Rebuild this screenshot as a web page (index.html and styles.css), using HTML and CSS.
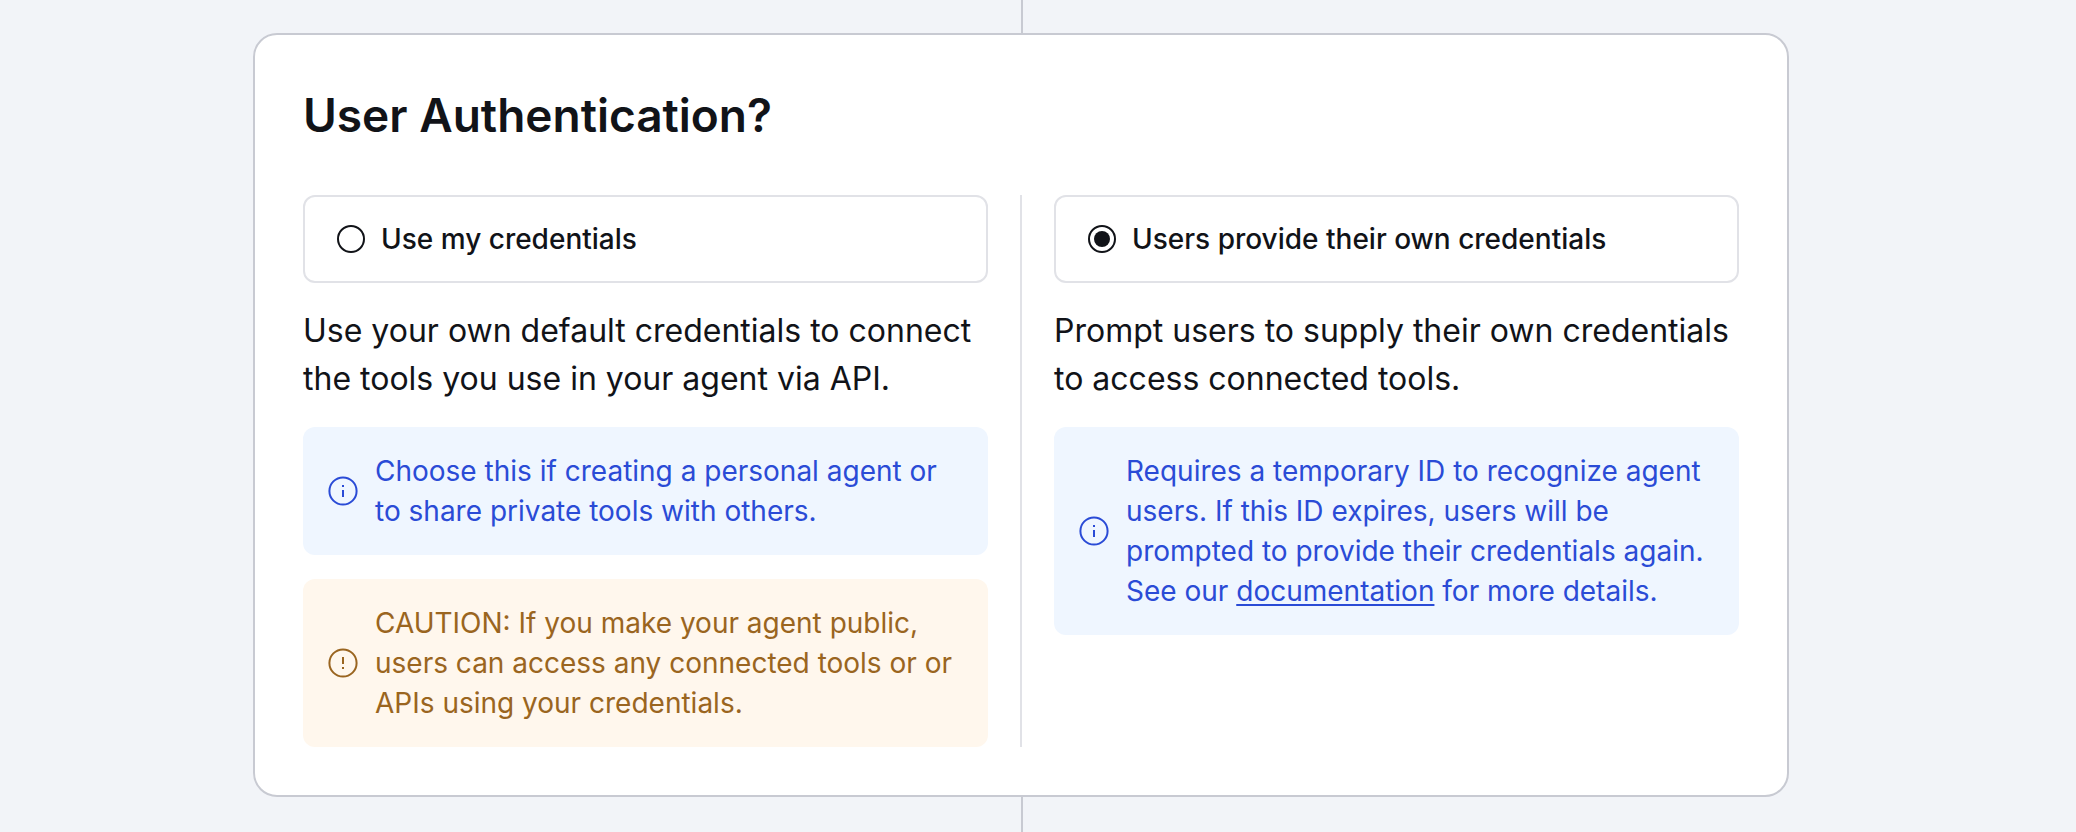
FILE: index.html
```html
<!DOCTYPE html>
<html lang="en">
<head>
<meta charset="utf-8">
<title>User Authentication</title>
<link rel="stylesheet" href="styles.css">
</head>
<body>
<main class="flow">
  <div class="connector connector-top"></div>
  <section class="card">
    <h1 class="card-title" id="auth-title">User Authentication?</h1>
    <div class="choices" role="radiogroup" aria-labelledby="auth-title">
      <div class="choice">
        <label class="option">
          <input class="radio" type="radio" name="auth" value="mine">
          <span>Use my credentials</span>
        </label>
        <p class="description">Use your own default credentials to connect the tools you use in your agent via API.</p>
        <div class="note note-info">
          <svg class="note-icon" viewBox="0 0 32 32" aria-hidden="true">
            <circle cx="16" cy="16" r="13.6" fill="none" stroke="currentColor" stroke-width="2"/>
            <path d="M15 15h2v7h-2zM15 10h2v2h-2z" fill="currentColor"/>
          </svg>
          <p class="note-text">Choose this if creating a personal agent or to share private tools with others.</p>
        </div>
        <div class="note note-caution">
          <svg class="note-icon" viewBox="0 0 32 32" aria-hidden="true">
            <circle cx="16" cy="16" r="13.6" fill="none" stroke="currentColor" stroke-width="2"/>
            <path d="M15 10h2v7h-2zM15 20h2v2h-2z" fill="currentColor"/>
          </svg>
          <p class="note-text">CAUTION: If you make your agent public, users can access any connected tools or or APIs using your credentials.</p>
        </div>
      </div>
      <div class="divider"></div>
      <div class="choice">
        <label class="option">
          <input class="radio" type="radio" name="auth" value="users" checked>
          <span>Users provide their own credentials</span>
        </label>
        <p class="description">Prompt users to supply their own credentials to access connected tools.</p>
        <div class="note note-info">
          <svg class="note-icon" viewBox="0 0 32 32" aria-hidden="true">
            <circle cx="16" cy="16" r="13.6" fill="none" stroke="currentColor" stroke-width="2"/>
            <path d="M15 15h2v7h-2zM15 10h2v2h-2z" fill="currentColor"/>
          </svg>
          <p class="note-text">Requires a temporary ID to recognize agent users. If this ID expires, users will be prompted to provide their credentials again. See our <a class="link" href="#documentation">documentation</a> for more details.</p>
        </div>
      </div>
    </div>
  </section>
  <div class="connector connector-bottom"></div>
</main>
</body>
</html>
```
FILE: styles.css
```css
* { box-sizing: border-box; }
body {
  margin: 0;
  background: #f2f4f8;
  color: #111318;
  font-family: Inter, "Liberation Sans", sans-serif;
}
h1, p { margin: 0; }
.flow {
  display: flex;
  flex-direction: column;
  align-items: center;
  min-height: 100vh;
  padding-right: 34px;
}
.connector {
  align-self: flex-end;
  width: 50%;
  border-left: 2px solid #c8cad2;
}
.connector-top { height: 33px; }
.connector-bottom { flex: 1; }
.card {
  width: 100%;
  max-width: 1536px;
  padding: 48px;
  background: #fff;
  border: 2px solid #c8cad2;
  border-radius: 24px;
}
.card-title {
  margin-bottom: 48px;
  font-size: 46px;
  font-weight: 600;
  line-height: 64px;
}
.choices {
  display: grid;
  grid-template-columns: 1fr 2px 1fr;
  gap: 32px;
}
.divider { background: #e1e2e7; }
.choice {
  display: flex;
  flex-direction: column;
  gap: 24px;
}
.option {
  display: flex;
  align-items: center;
  gap: 16px;
  padding: 22px 32px;
  border: 2px solid #e1e2e7;
  border-radius: 12px;
  font-size: 28px;
  font-weight: 500;
  line-height: 40px;
}
.radio {
  appearance: none;
  display: grid;
  place-items: center;
  flex: none;
  width: 28px;
  height: 28px;
  margin: 0;
  border: 2px solid #111318;
  border-radius: 50%;
}
.radio:checked::before {
  content: "";
  width: 16px;
  height: 16px;
  border-radius: 50%;
  background: #111318;
}
.description {
  font-size: 32px;
  line-height: 48px;
}
.note {
  display: flex;
  align-items: center;
  gap: 16px;
  padding: 24px;
  border-radius: 12px;
  font-size: 28px;
  line-height: 40px;
}
.note-info { background: #eff6ff; color: #2a4bd6; }
.note-caution { background: #fff7ed; color: #9a6520; }
.note-icon {
  flex: none;
  width: 32px;
  height: 32px;
}
.link {
  color: inherit;
  text-decoration: underline;
  text-decoration-thickness: 2px;
  text-decoration-skip-ink: none;
  text-underline-offset: 3px;
}
```
